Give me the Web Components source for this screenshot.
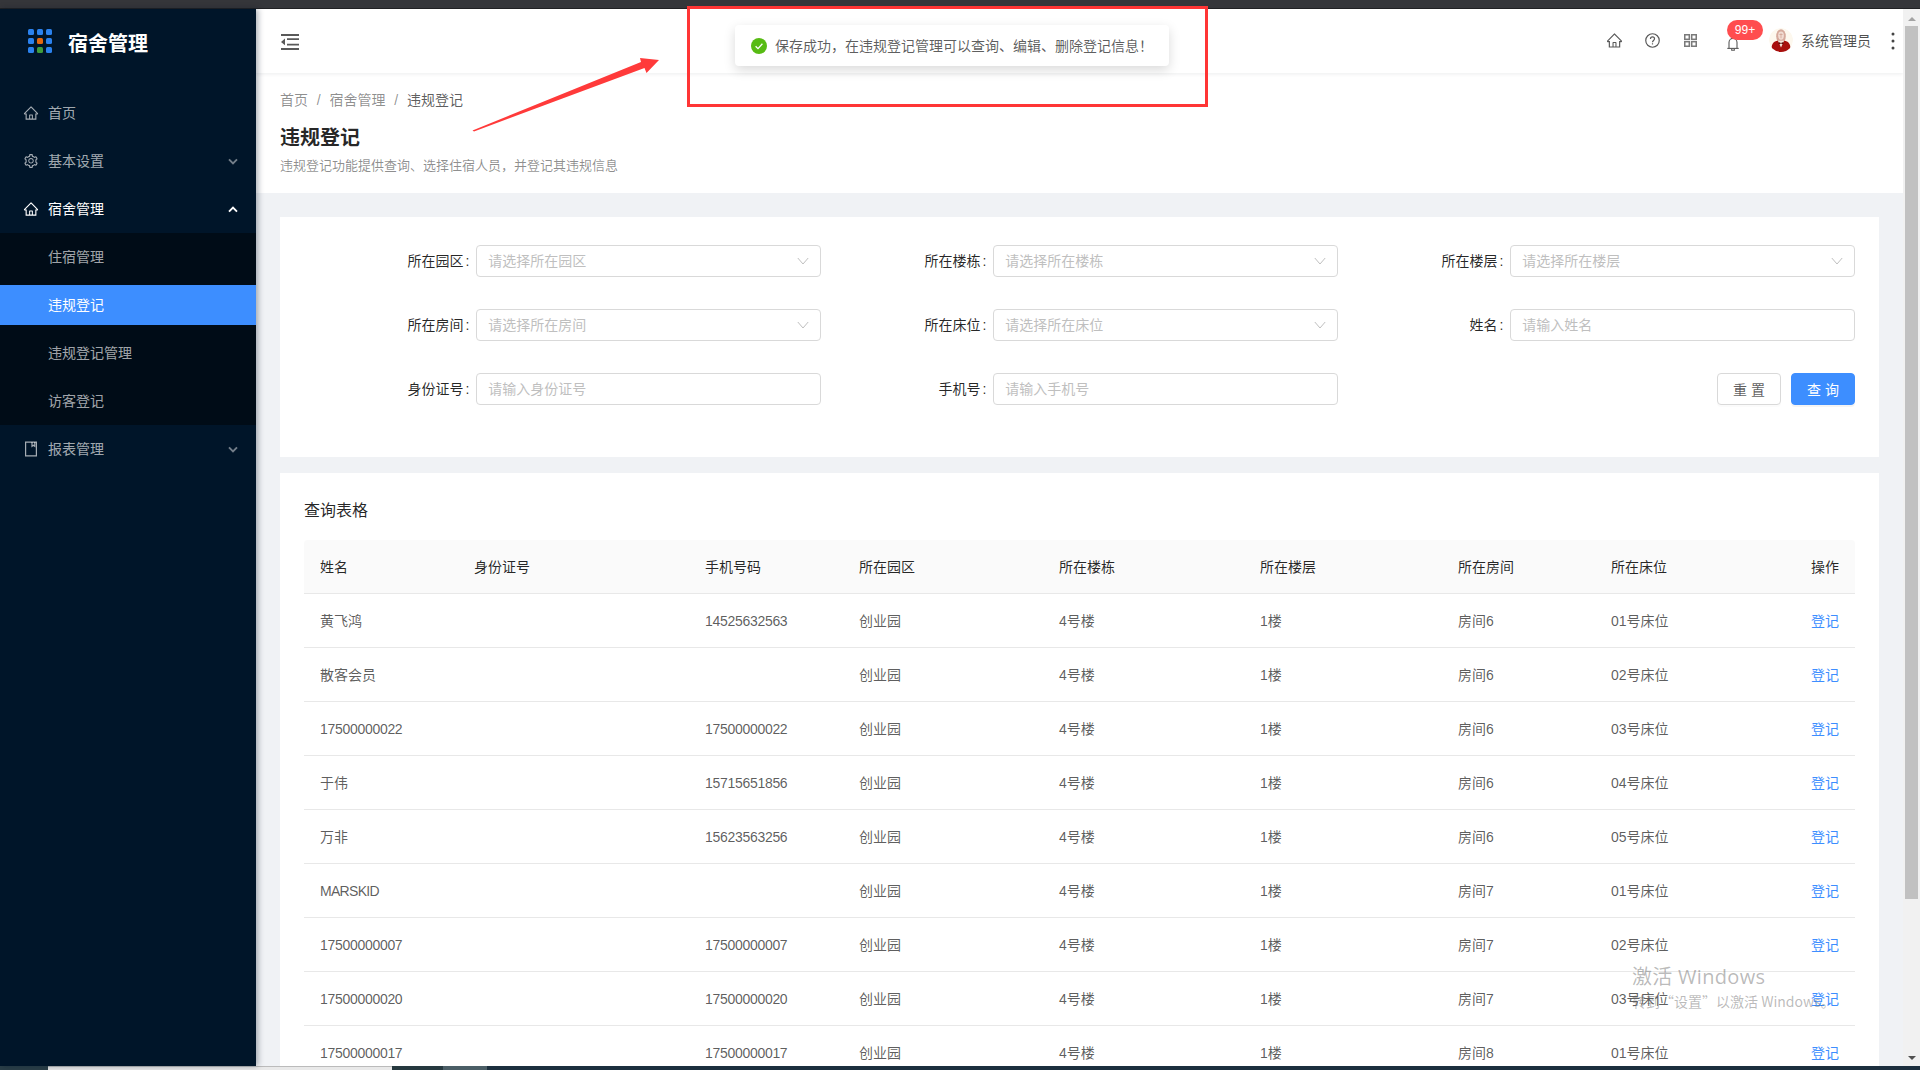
<!DOCTYPE html>
<html lang="zh-CN">
<head>
<meta charset="utf-8">
<title>违规登记</title>
<style>
  html, body { margin: 0; padding: 0; height: 100%; overflow: hidden; background: #f0f2f5; }
  body { font-family: "Liberation Sans", "Noto Sans CJK SC", sans-serif; font-size: 14px; }
</style>
</head>
<body>
<app-shell></app-shell>
<script>
const ICONS = {
  home: '<svg viewBox="0 0 1024 1024" fill="currentColor"><path d="M946.5 505L560.1 118.8l-25.9-25.9a31.5 31.5 0 0 0-44.4 0L77.5 505a63.9 63.9 0 0 0-18.8 46c.4 35.2 29.7 63.3 64.9 63.3h42.5V940h691.8V614.3h43.4c17.1 0 33.2-6.7 45.3-18.8a63.6 63.6 0 0 0 18.7-45.3c0-17-6.7-33.1-18.8-45.2zM568 868H456V664h112v204zm217.9-325.7V868H632V640c0-22.1-17.9-40-40-40H432c-22.1 0-40 17.9-40 40v228H238.1V542.3h-96l370-369.7 23.1 23.1L882 542.3h-96.1z"/></svg>',
  setting: '<svg viewBox="0 0 1024 1024" fill="currentColor"><path d="M924.8 625.7l-65.5-56c3.1-19 4.7-38.4 4.7-57.8s-1.6-38.8-4.7-57.8l65.5-56a32.03 32.03 0 0 0 9.3-35.2l-.9-2.6a443.74 443.74 0 0 0-79.7-137.9l-1.8-2.1a32.12 32.12 0 0 0-35.1-9.5l-81.3 28.9c-30-24.6-63.5-44-99.7-57.6l-15.7-85a32.05 32.05 0 0 0-25.8-25.7l-2.7-.5c-52.1-9.4-106.9-9.4-159 0l-2.7.5a32.05 32.05 0 0 0-25.8 25.7l-15.8 85.4a351.86 351.86 0 0 0-99 57.4l-81.9-29.1a32 32 0 0 0-35.1 9.5l-1.8 2.1a446.02 446.02 0 0 0-79.7 137.9l-.9 2.6c-4.5 12.5-.8 26.5 9.3 35.2l66.3 56.6c-3.1 18.8-4.6 38-4.6 57.1 0 19.2 1.5 38.4 4.6 57.1L99 625.5a32.03 32.03 0 0 0-9.3 35.2l.9 2.6c18.1 50.4 44.9 96.9 79.7 137.9l1.8 2.1a32.12 32.12 0 0 0 35.1 9.5l81.9-29.1c29.8 24.5 63.1 43.9 99 57.4l15.8 85.4a32.05 32.05 0 0 0 25.8 25.7l2.7.5a449.4 449.4 0 0 0 159 0l2.7-.5a32.05 32.05 0 0 0 25.8-25.7l15.7-85a350 350 0 0 0 99.7-57.6l81.3 28.9a32 32 0 0 0 35.1-9.5l1.8-2.1c34.8-41.1 61.6-87.5 79.7-137.9l.9-2.6c4.5-12.3.8-26.3-9.3-35zM788.3 465.9c2.5 15.1 3.8 30.6 3.8 46.1s-1.3 31-3.8 46.1l-6.6 40.1 74.7 63.9a370.03 370.03 0 0 1-42.6 73.6L721 702.8l-31.4 25.8c-23.9 19.6-50.5 35-79.3 45.8l-38.1 14.3-17.9 97a377.5 377.5 0 0 1-85 0l-17.9-97.2-37.8-14.5c-28.5-10.8-55-26.2-78.7-45.7l-31.4-25.9-93.4 33.2c-17-22.9-31.2-47.6-42.6-73.6l75.5-64.5-6.5-40c-2.4-14.9-3.7-30.3-3.7-45.5 0-15.3 1.2-30.6 3.7-45.5l6.5-40-75.5-64.5c11.3-26.1 25.6-50.7 42.6-73.6l93.4 33.2 31.4-25.9c23.7-19.5 50.2-34.9 78.7-45.7l37.9-14.3 17.9-97.2c28.1-3.2 56.8-3.2 85 0l17.9 97 38.1 14.3c28.7 10.8 55.4 26.2 79.3 45.8l31.4 25.8 92.8-32.9c17 22.9 31.2 47.6 42.6 73.6L781.8 426l6.5 39.9zM512 326c-97.2 0-176 78.8-176 176s78.8 176 176 176 176-78.8 176-176-78.8-176-176-176zm79.2 255.2A111.6 111.6 0 0 1 512 614c-29.9 0-58-11.7-79.2-32.8A111.6 111.6 0 0 1 400 502c0-29.9 11.7-58 32.8-79.2C454 401.6 482.1 390 512 390c29.9 0 58 11.6 79.2 32.8A111.6 111.6 0 0 1 624 502c0 29.9-11.7 58-32.8 79.2z"/></svg>',
  book: '<svg viewBox="0 0 16 16" fill="none" stroke="currentColor" stroke-width="1.2"><path d="M2.6 1.1h10.8v13.8H2.6z"/><path d="M9 1.1v4.2l1.4-1 1.4 1V1.1"/></svg>',
  down: '<svg viewBox="0 0 10 7" fill="none" stroke="currentColor" stroke-width="1.9"><path d="M1 1.3l4 4 4-4"/></svg>',
  up: '<svg viewBox="0 0 10 7" fill="none" stroke="currentColor" stroke-width="1.9"><path d="M1 5.7l4-4 4 4"/></svg>',
  select: '<svg viewBox="0 0 12 8" fill="none" stroke="currentColor" stroke-width="1"><path d="M.8 1l5.2 6 5.2-6"/></svg>',
  collapse: '<svg viewBox="0 0 18 16" fill="currentColor"><path d="M0 0h18v2H0zM0 14h18v2H0zM6 4.2h12v1.7H6zM6 9.8h12v1.7H6zM4 4.6v6.6L0 7.9z"/></svg>',
  question: '<svg viewBox="0 0 14 14" fill="none" stroke="currentColor" stroke-width="1.1"><circle cx="7" cy="7" r="6.3"/><path d="M5.1 5.5c0-1.2.9-1.9 1.9-1.9s1.9.7 1.9 1.8c0 1.5-1.9 1.6-1.9 3.2"/><path d="M7 9.6v1.1"/></svg>',
  grid: '<svg viewBox="0 0 12 12" fill="none" stroke="currentColor" stroke-width="1.4"><rect x=".7" y=".7" width="4.2" height="4.2"/><rect x="7.1" y=".7" width="4.2" height="4.2"/><rect x=".7" y="7.1" width="4.2" height="4.2"/><rect x="7.1" y="7.1" width="4.2" height="4.2"/></svg>',
  bell: '<svg viewBox="0 0 12 14" fill="none" stroke="currentColor" stroke-width="1.1"><path d="M2 11.2V5.4a4 4 0 0 1 8 0v5.8"/><path d="M.3 11.4h11.4"/><path d="M4.7 11.8v1.5h2.6v-1.5"/></svg>',
  dots: '<svg viewBox="0 0 4 18" fill="currentColor"><circle cx="2" cy="2" r="1.5"/><circle cx="2" cy="9" r="1.5"/><circle cx="2" cy="16" r="1.5"/></svg>',
  check: '<svg viewBox="0 0 16 16"><circle cx="8" cy="8" r="8" fill="#57bb13"/><path d="M4.6 8.2l2.4 2.4 4.4-4.8" fill="none" stroke="#fff" stroke-width="1.3"/></svg>',
  avatar: '<svg viewBox="0 0 24 24"><circle cx="12" cy="12" r="12" fill="#fdf8ee"/><ellipse cx="12" cy="8.2" rx="4.8" ry="7" fill="#d6aa9c"/><ellipse cx="12" cy="7.6" rx="2.9" ry="4.2" fill="#f1dcd2"/><path d="M12 5.2v5M10.4 6.5h3.2" stroke="#cf9f90" stroke-width=".7"/><path d="M2.5 21.5c0-6.5 2.5-8 6-8.7h7c3.5.7 6 2.2 6 8.7-2.5 1.9-6 2.5-9.5 2.5s-7-.6-9.5-2.5z" fill="#a80f0d"/><path d="M8.8 12.4h6.4L12 19.6z" fill="#f4e6dc"/><path d="M9.6 14l2.4 1 2.4-1v2.4L12 15.6l-2.4.8z" fill="#5c0a08"/></svg>'
};

function defineEl(name, html, init) {
  customElements.define(name, class extends HTMLElement {
    constructor() {
      super();
      this.attachShadow({ mode: 'open' }).innerHTML = html;
    }
    connectedCallback() {
      if (init && !this._done) { this._done = true; init(this); }
    }
  });
}

defineEl('app-icon', '<style>:host{display:inline-flex;flex:none}svg{display:block;width:100%;height:100%}</style><span id="i" style="display:contents"></span>', el => {
  el.shadowRoot.getElementById('i').innerHTML = ICONS[el.getAttribute('name')] || '';
});

defineEl('dorm-logo', `<style>
  :host{display:flex;align-items:center;height:80px;box-sizing:border-box;padding:0 0 12px 28px;flex:none}
  .dots{display:grid;grid-template-columns:repeat(3,6px);grid-auto-rows:6px;gap:3px;margin:-4px 16px 0 0}
  i{display:block;border-radius:1.5px;background:#2b82ee}
  .o{background:#e5680f}.g{background:#3f9d3c}
  b{font-size:20px;line-height:28px;color:#fff;font-weight:700;margin-top:2px}
</style>
<div class="dots"><i></i><i></i><i></i><i></i><i class="o"></i><i></i><i></i><i class="g"></i><i></i></div>
<b><slot></slot></b>`);

defineEl('nav-item', `<style>
  :host{display:flex;align-items:center;height:48px;padding:0 18px 0 23px;color:rgba(255,255,255,.65);font-size:14px;line-height:22px;flex:none;box-sizing:border-box}
  :host([open]){color:#fff}
  :host([sub]){padding-left:48px;height:40px;margin:4px 0}
  :host([active]){background:#3d8eff;color:#fff}
  .icon{width:16px;height:16px;margin-right:9px;display:flex}
  .icon app-icon{width:16px;height:16px}
  :host([sub]) .icon{display:none}
  .label{flex:1}
  .arrow{width:10px;height:7px;display:none;color:rgba(255,255,255,.45);margin-right:0}
  :host([open]) .arrow{color:#fff}
  :host([arrow]) .arrow{display:block}
  .arrow app-icon{width:10px;height:7px;display:flex}
</style>
<span class="icon"><app-icon id="ic"></app-icon></span><span class="label"><slot></slot></span><span class="arrow"><app-icon id="ar"></app-icon></span>`, el => {
  const r = el.shadowRoot;
  r.getElementById('ic').shadowRoot.getElementById('i').innerHTML = ICONS[el.getAttribute('icon')] || '';
  r.getElementById('ar').shadowRoot.getElementById('i').innerHTML = ICONS[el.getAttribute('arrow')] || '';
});

defineEl('dorm-sidebar', `<style>
  :host{display:flex;flex-direction:column;width:256px;flex:none;background:#001529;box-shadow:2px 0 6px rgba(0,21,41,.35);position:relative;z-index:2}
  .sub{background:#000c17;display:flex;flex-direction:column}
</style>
<dorm-logo>宿舍管理</dorm-logo>
<nav-item icon="home">首页</nav-item>
<nav-item icon="setting" arrow="down">基本设置</nav-item>
<nav-item icon="home" arrow="up" open>宿舍管理</nav-item>
<div class="sub">
  <nav-item sub>住宿管理</nav-item>
  <nav-item sub active>违规登记</nav-item>
  <nav-item sub>违规登记管理</nav-item>
  <nav-item sub>访客登记</nav-item>
</div>
<nav-item icon="book" arrow="down">报表管理</nav-item>`);

defineEl('top-header', `<style>
  :host{display:flex;align-items:center;height:64px;box-sizing:border-box;background:#fff;box-shadow:0 1px 4px rgba(0,21,41,.08);padding:0 8px 0 25px;flex:none;position:relative;z-index:1;color:rgba(0,0,0,.65)}
  .collapse{width:18px;height:16px;color:#595959;display:flex;margin-top:2px}
  .spacer{flex:1}
  .ic{color:#595959;display:flex}
  .home{width:17px;height:17px;margin-right:22px;margin-left:-2px;margin-top:-2px}
  .q{width:15px;height:15px;margin-right:24px;margin-top:-1px}
  .grid{width:13px;height:13px;margin-right:30px;color:#7a7a7a;margin-top:-1px}
  .bell{width:12px;height:14px;margin-right:30px;position:relative;margin-top:6px}
  .bell app-icon{width:12px;height:14px}
  .badge{position:absolute;left:0;top:-17px;width:36px;height:20px;border-radius:10px;background:#ff4d4f;color:#fff;font-size:12px;line-height:21px;text-align:center}
  .av{width:24px;height:24px;margin-right:8px;margin-top:-2px;border-radius:50%;overflow:hidden}
  .av app-icon{width:24px;height:24px}
  .name{font-size:14px;line-height:22px;margin-right:20px;color:rgba(0,0,0,.7)}
  .dots{width:4px;height:18px;color:#444}
  app-icon{width:100%;height:100%}
</style>
<span class="collapse"><app-icon name="collapse"></app-icon></span>
<span class="spacer"></span>
<span class="ic home"><app-icon name="home"></app-icon></span>
<span class="ic q"><app-icon name="question"></app-icon></span>
<span class="ic grid"><app-icon name="grid"></app-icon></span>
<span class="ic bell"><app-icon name="bell"></app-icon><span class="badge">99+</span></span>
<span class="av"><app-icon name="avatar"></app-icon></span>
<span class="name">系统管理员</span>
<span class="ic dots"><app-icon name="dots"></app-icon></span>`);

defineEl('page-title', `<style>
  :host{display:block;height:120px;box-sizing:border-box;background:#fff;padding:16px 24px 0;flex:none}
  .crumb{font-size:14px;line-height:22px;color:rgba(0,0,0,.45);display:flex}
  .crumb i{font-style:normal;margin:0 8.8px}
  .crumb span:last-child{color:rgba(0,0,0,.65)}
  h1{margin:13px 0 0;font-size:20px;line-height:28px;font-weight:700;color:rgba(0,0,0,.85)}
  p{margin:4px 0 0;font-size:13px;line-height:20px;color:rgba(0,0,0,.45)}
</style>
<div class="crumb"><span>首页</span><i>/</i><span>宿舍管理</span><i>/</i><span>违规登记</span></div>
<h1>违规登记</h1>
<p>违规登记功能提供查询、选择住宿人员，并登记其违规信息</p>`);

defineEl('form-field', `<style>
  :host{display:flex;height:32px;min-width:0}
  .lab{width:33.3333%;flex:none;display:flex;justify-content:flex-end;align-items:center;font-size:14px;color:rgba(0,0,0,.85);line-height:22px}
  .lab i{font-style:normal;margin:0 7px 0 2px}
  .box{flex:1;min-width:0;box-sizing:border-box;height:32px;border:1px solid #d9d9d9;border-radius:4px;background:#fff;padding:0 11px;display:flex;align-items:center;justify-content:space-between;color:#bfbfbf;font-size:14px;line-height:22px}
  .chev{width:12px;height:8px;display:none;color:#bfbfbf}
  :host([select]) .chev{display:flex}
  app-icon{width:12px;height:8px}
</style>
<div class="lab"><span id="l"></span><i>:</i></div>
<div class="box"><span id="p"></span><span class="chev"><app-icon name="select"></app-icon></span></div>`, el => {
  el.shadowRoot.getElementById('l').textContent = el.getAttribute('label');
  el.shadowRoot.getElementById('p').textContent = el.getAttribute('hint');
});

defineEl('search-card', `<style>
  :host{display:block;background:#fff;height:240px;box-sizing:border-box;padding:28px 24px 0;flex:none}
  .grid{display:grid;grid-template-columns:repeat(3,1fr);row-gap:32px}
  .btns{display:flex;justify-content:flex-end;gap:10px}
  button{width:64px;height:32px;box-sizing:border-box;border-radius:4px;font:inherit;font-size:14px;padding:0;border:1px solid #d9d9d9;background:#fff;color:rgba(0,0,0,.65);box-shadow:0 2px 0 rgba(0,0,0,.015)}
  button.p{background:#3d8eff;border-color:#3d8eff;color:#fff;box-shadow:0 2px 0 rgba(0,0,0,.045)}
</style>
<div class="grid">
  <form-field select label="所在园区" hint="请选择所在园区"></form-field>
  <form-field select label="所在楼栋" hint="请选择所在楼栋"></form-field>
  <form-field select label="所在楼层" hint="请选择所在楼层"></form-field>
  <form-field select label="所在房间" hint="请选择所在房间"></form-field>
  <form-field select label="所在床位" hint="请选择所在床位"></form-field>
  <form-field label="姓名" hint="请输入姓名"></form-field>
  <form-field label="身份证号" hint="请输入身份证号"></form-field>
  <form-field label="手机号" hint="请输入手机号"></form-field>
  <div class="btns"><button>重 置</button><button class="p">查 询</button></div>
</div>`);

const ROWS = [
  ['黄飞鸿','', '14525632563','房间6','01号床位'],
  ['散客会员','', '','房间6','02号床位'],
  ['17500000022','', '17500000022','房间6','03号床位'],
  ['于伟','', '15715651856','房间6','04号床位'],
  ['万非','', '15623563256','房间6','05号床位'],
  ['MARSKID','', '','房间7','01号床位'],
  ['17500000007','', '17500000007','房间7','02号床位'],
  ['17500000020','', '17500000020','房间7','03号床位'],
  ['17500000017','', '17500000017','房间8','01号床位']
];
const esc = s => /^\d+$/.test(s) ? `<span class="n">${s}</span>` : /^[A-Z]+$/.test(s) ? `<span class="m">${s}</span>` : s;

defineEl('data-table', `<style>
  :host{display:block;background:#fff;padding:24px 24px 0}
  h2{margin:0 0 15px;font-size:16px;line-height:28px;font-weight:400;color:rgba(0,0,0,.85)}
  table{width:1551px;table-layout:fixed;border-collapse:separate;border-spacing:0;font-size:14px;line-height:22px}
  th,td{padding:0 16px;height:54px;box-sizing:border-box;text-align:left;font-weight:400;border-bottom:1px solid #e8e8e8;white-space:nowrap}
  th{background:#fafafa;color:rgba(0,0,0,.85)}
  th:first-child{border-top-left-radius:4px}
  th:last-child{border-top-right-radius:4px}
  td{color:rgba(0,0,0,.65)}
  .n{letter-spacing:-.3px}
  .m{letter-spacing:-.7px}
  .link{color:#3d8eff}
</style>
<h2>查询表格</h2>
<table>
  <colgroup><col style="width:154px"><col style="width:231px"><col style="width:154px"><col style="width:200px"><col style="width:201px"><col style="width:198px"><col style="width:153px"><col style="width:200px"><col style="width:60px"></colgroup>
  <thead><tr><th>姓名</th><th>身份证号</th><th>手机号码</th><th>所在园区</th><th>所在楼栋</th><th>所在楼层</th><th>所在房间</th><th>所在床位</th><th>操作</th></tr></thead>
  <tbody>${ROWS.map(r => `<tr><td>${esc(r[0])}</td><td></td><td>${esc(r[2])}</td><td>创业园</td><td>4号楼</td><td>1楼</td><td>${r[3]}</td><td>${r[4]}</td><td class="link">登记</td></tr>`).join('')}</tbody>
</table>`);

defineEl('fake-scrollbar', `<style>
  :host{display:flex;flex-direction:column;align-items:center;width:17px;flex:none;background:#f1f1f1;box-sizing:border-box}
  .a{height:17px;flex:none;display:flex;align-items:center;justify-content:center}
  .u{width:0;height:0;border:4px solid transparent;border-top:0;border-bottom:4px solid #a3a3a3;margin-top:2px}
  .d{width:0;height:0;border:4px solid transparent;border-bottom:0;border-top:4px solid #505050}
  .t{width:13px;height:873px;background:#c1c1c1;flex:none}
  .s{flex:1}
</style>
<div class="a"><div class="u"></div></div><div class="t"></div><div class="s"></div><div class="a"><div class="d"></div></div>`);

defineEl('toast-message', `<style>
  :host{position:absolute;left:735px;top:25px;width:434px;height:41px;box-sizing:border-box;background:#fff;border-radius:4px;box-shadow:0 4px 12px rgba(0,0,0,.15);display:flex;align-items:center;padding:0 16px;font-size:14px;line-height:22px;color:rgba(0,0,0,.65);z-index:10;white-space:nowrap}
  .i{width:16px;height:16px;margin-right:8px;display:flex}
  app-icon{width:16px;height:16px}
</style><span class="i"><app-icon name="check"></app-icon></span><span><slot></slot></span>`);

defineEl('mark-up', `<style>
  :host{position:absolute;left:0;top:0;width:1920px;height:1070px;pointer-events:none;z-index:11;display:block}
  .box{position:absolute;left:687px;top:6px;width:521px;height:101px;box-sizing:border-box;border:3px solid #ff3535}
  svg{position:absolute;left:0;top:0}
</style>
<div class="box"></div>
<svg width="1920" height="1070"><polygon points="472.5,130.5 641,62 640,58 659,60 646.5,73 644.5,68 474,131.5" fill="#ff3a3a"/></svg>`);

defineEl('win-watermark', `<style>
  :host{position:absolute;left:1632px;top:962px;z-index:12;color:rgba(90,90,90,.42);display:block;white-space:nowrap;pointer-events:none}
  .a{font-size:20px;line-height:30px;font-family:"Open Sans","Noto Sans CJK SC",sans-serif;letter-spacing:.3px}
  .b{font-size:14px;line-height:18px;font-family:"Noto Sans CJK SC",sans-serif}
</style><div class="a">激活 Windows</div><div class="b">转到“设置”以激活 Windows。</div>`);

defineEl('app-shell', `<style>
  :host{display:flex;flex-direction:column;width:1920px;height:1070px;position:relative;overflow:hidden;background:#f0f2f5;font-family:"Liberation Sans","Noto Sans CJK SC",sans-serif}
  .chrome{height:9px;flex:none;background:#35363a;border-bottom:1px solid #202124;box-sizing:border-box}
  .mid{flex:1;display:flex;min-height:0}
  .main{flex:1;min-width:0;display:flex;flex-direction:column;overflow:hidden}
  .content{display:flex;flex-direction:column;gap:16px;padding:24px}
  .task{height:4px;flex:none;display:flex;background:#1c2f3e}
  .task i{display:block;height:100%}
</style>
<div class="chrome"></div>
<div class="mid">
  <dorm-sidebar></dorm-sidebar>
  <div class="main">
    <top-header></top-header>
    <page-title></page-title>
    <div class="content">
      <search-card></search-card>
      <data-table></data-table>
    </div>
  </div>
  <fake-scrollbar></fake-scrollbar>
</div>
<div class="task">
  <i style="width:48px;background:#2b3f48"></i>
  <i style="width:344px;background:#e9e9e9;border-top:1px solid #bbb;box-sizing:border-box"></i>
  <i style="width:51px;background:#26393f"></i>
  <i style="width:44px;background:#4b5e66"></i>
</div>
<toast-message>保存成功，在违规登记管理可以查询、编辑、删除登记信息！</toast-message>
<mark-up></mark-up>
<win-watermark></win-watermark>`);
</script>
</body>
</html>
